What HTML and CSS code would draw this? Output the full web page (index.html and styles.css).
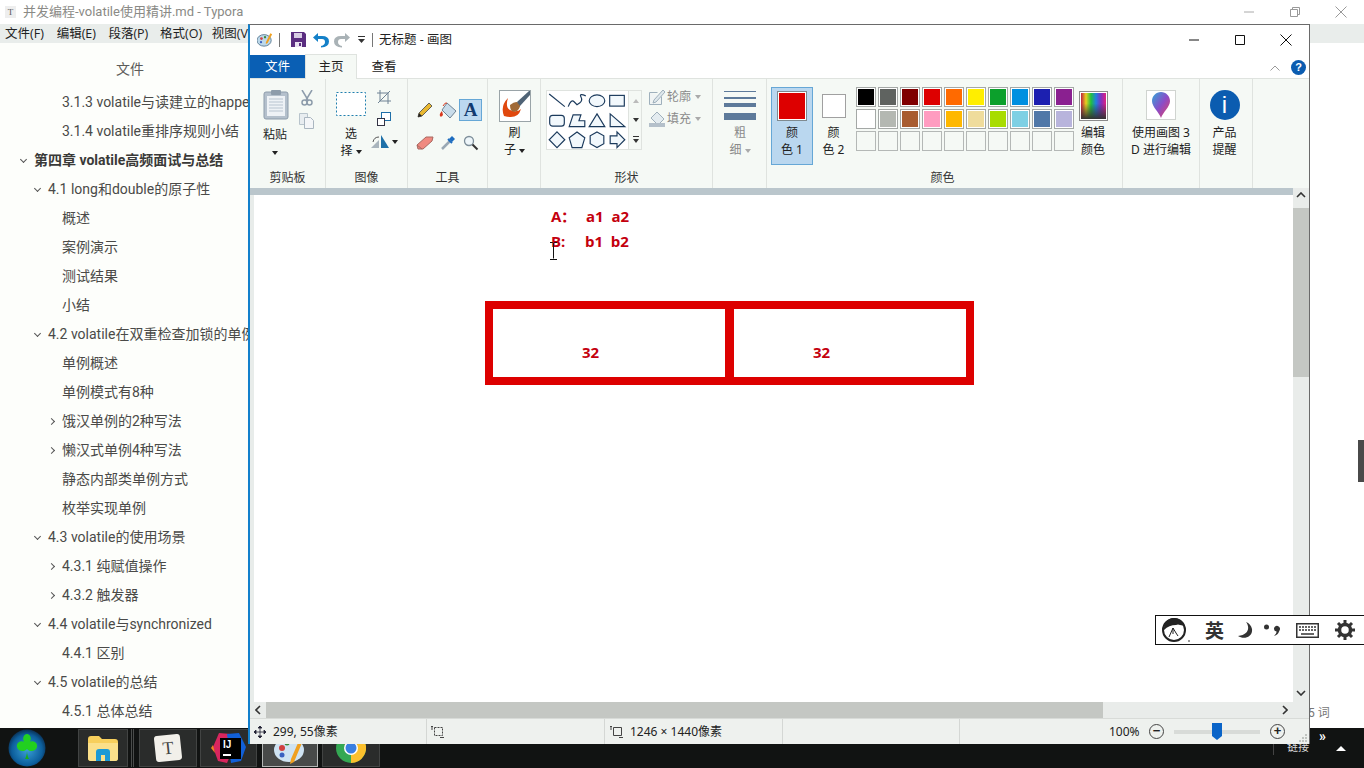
FILE: index.html
```html
<!DOCTYPE html>
<html lang="zh-CN">
<head>
<meta charset="utf-8">
<title>无标题 - 画图</title>
<link rel="stylesheet" href="styles.css">
</head>
<body>
<div class="desktop">

  <div class="typora">
    <div class="ty-title">
      <span class="ty-icon">T</span>
      <span class="ty-name">并发编程-volatile使用精讲.md - Typora</span>
      <div class="ty-ctrls">
        <svg width="12" height="12" viewBox="0 0 12 12"><path d="M1 6h10" stroke="#aaa" fill="none"/></svg>
        <svg width="12" height="12" viewBox="0 0 12 12"><path d="M1.500 3.500h7v7h-7zM3.500 3.500v-2h7v7h-2" stroke="#999" fill="none"/></svg>
        <svg width="12" height="12" viewBox="0 0 12 12"><path d="M.5.500l11 11M11.500.500l-11 11" stroke="#999" fill="none"/></svg>
      </div>
    </div>
    <div class="ty-menu">
      <span class="m1">文件(F)</span><span class="m1">编辑(E)</span><span class="m1">段落(P)</span><span class="m1">格式(O)</span><span class="m1">视图(V)</span>
    </div>
    <div class="ty-main">
      <aside class="toc">
        <div class="toc-head">文件</div>
        <div class="row l3">3.1.3 volatile与读建立的happens-before</div>
        <div class="row l3">3.1.4 volatile重排序规则小结</div>
        <div class="row l1 strong"><i class="chev down"></i>第四章 volatile高频面试与总结</div>
        <div class="row l2"><i class="chev down"></i>4.1 long和double的原子性</div>
        <div class="row l3">概述</div>
        <div class="row l3">案例演示</div>
        <div class="row l3">测试结果</div>
        <div class="row l3">小结</div>
        <div class="row l2"><i class="chev down"></i>4.2 volatile在双重检查加锁的单例中的应用</div>
        <div class="row l3">单例概述</div>
        <div class="row l3">单例模式有8种</div>
        <div class="row l3"><i class="chev right"></i>饿汉单例的2种写法</div>
        <div class="row l3"><i class="chev right"></i>懒汉式单例4种写法</div>
        <div class="row l3">静态内部类单例方式</div>
        <div class="row l3">枚举实现单例</div>
        <div class="row l2"><i class="chev down"></i>4.3 volatile的使用场景</div>
        <div class="row l3"><i class="chev right"></i>4.3.1 纯赋值操作</div>
        <div class="row l3"><i class="chev right"></i>4.3.2 触发器</div>
        <div class="row l2"><i class="chev down"></i>4.4 volatile与synchronized</div>
        <div class="row l3">4.4.1 区别</div>
        <div class="row l2"><i class="chev down"></i>4.5 volatile的总结</div>
        <div class="row l3">4.5.1 总体总结</div>
      </aside>
      <div class="ty-doc">
        <div class="ty-thumb"></div>
        <div class="ty-count">5 词</div>
      </div>
    </div>
  </div>

  <div class="taskbar">
    <div class="orb">
      <svg width="38" height="38" viewBox="0 0 38 38">
        <defs><radialGradient id="og" cx=".5" cy=".55" r=".55"><stop offset="0" stop-color="#3aa0d8"/><stop offset=".75" stop-color="#0c5e9c"/><stop offset="1" stop-color="#0a2f52"/></radialGradient></defs>
        <circle cx="19" cy="19" r="18.500" fill="url(#og)"/>
        <path d="M19 20c-2 3-9 3-10-2s5-7 7-5c-2-4 0-8 3-8s5 4 3 8c2-2 8 0 7 5s-8 5-10 2z" fill="#22d020"/>
        <path d="M19 19c0 4 0 8-2 11h4c-2-3-2-7-2-11z" fill="#18b018"/>
      </svg>
    </div>
    <div class="tb-gap"></div>
    <div class="tb-btn b-folder">
      <svg width="30" height="26" viewBox="0 0 30 26"><path d="M0 4q0-3 3-3h8l3 3h13q3 0 3 3v16q0 3-3 3H3q-3 0-3-3z" fill="#f7cf5c"/><path d="M0 8h30v15q0 3-3 3H3q-3 0-3-3z" fill="#fbe08a"/><path d="M8 26v-9q0-3 3-3h8q3 0 3 3v9h-5v-6h-4v6z" fill="#1c9ad6"/></svg>
    </div>
    <div class="tb-sep"></div>
    <div class="tb-btn b-typora">
      <div class="t-tile">T</div>
    </div>
    <div class="tb-btn b-ij">
      <svg width="36" height="34" viewBox="0 0 36 34"><path d="M2 16L8 2l12 1 4 10-8 19-9-2z" fill="#d8265e"/><path d="M16 3l12-1 7 14-5 14-10 2z" fill="#1160d8"/><path d="M2 14L0 17l4 5z" fill="#f58220"/></svg>
      <div class="ij-tile"><span>IJ</span><i></i></div>
    </div>
    <div class="tb-btn b-paint">
      <svg width="32" height="30" viewBox="0 0 32 30"><ellipse cx="15" cy="15" rx="15" ry="12" fill="#cfe3f2"/><circle cx="8" cy="13" r="3" fill="#d04040"/><circle cx="13" cy="8" r="2.500" fill="#3a8a3a"/><circle cx="8" cy="20" r="2.500" fill="#3a60c0"/><path d="M27 1l3 2-10 24-4 2 1-5z" fill="#f0a020"/></svg>
    </div>
    <div class="tb-btn b-chrome">
      <svg width="30" height="30" viewBox="0 0 30 30"><circle cx="15" cy="15" r="15" fill="#34a853"/><path d="M15 15L2 7.500A15 15 0 0 1 28 7.500z" fill="#ea4335"/><path d="M15 15L28 7.500A15 15 0 0 1 15 30z" fill="#fbc02d"/><circle cx="15" cy="15" r="7" fill="#fff"/><circle cx="15" cy="15" r="5.500" fill="#3a7fe0"/></svg>
    </div>
    <div class="tray">
      <span class="tray-sep"></span>
      <span class="tray-link">链接</span>
      <span class="tray-more">»</span>
      <span class="tray-up"></span>
    </div>
  </div>

  <div class="paint">
    <div class="p-title">
      <svg class="qa-app" width="16" height="15" viewBox="0 0 18 16"><ellipse cx="8" cy="9" rx="8" ry="6.500" fill="#bcd8ea" stroke="#5a7a90"/><circle cx="5" cy="7" r="1.500" fill="#d04040"/><circle cx="9" cy="5.500" r="1.300" fill="#3a8a3a"/><circle cx="4.500" cy="11" r="1.300" fill="#3a60c0"/><path d="M15 1l2 1-5 10-2 1 0-2z" fill="#f0a020"/></svg>
      <span class="qa-sep"></span>
      <svg class="qa-save" width="15" height="15" viewBox="0 0 15 15"><path d="M0 0h13l2 2v13H0z" fill="#5a2d80"/><path d="M3 1h8v5H3z" fill="#d8cce4"/><path d="M4 10h7v5H4z" fill="#e8e0f0"/><path d="M8 11h2v3H8z" fill="#5a2d80"/></svg>
      <svg class="qa-undo" width="16" height="16" viewBox="0 0 16 16"><path d="M5 1L0 5.500 5 10V7h4q3 0 3 3t-4 4v1.500q8-.5 8-6T9 4H5z" fill="#1480c8"/></svg>
      <svg class="qa-redo" width="16" height="16" viewBox="0 0 16 16"><path d="M11 1l5 4.500L11 10V7H7q-3 0-3 3t4 4v1.500q-8-.5-8-6T7 4h4z" fill="#a9b2b6"/></svg>
      <svg class="qa-drop" width="7" height="8" viewBox="0 0 7 8"><path d="M0 0h7v1H0zM0 3h7L3.500 7z" fill="#333"/></svg>
      <span class="qa-sep qa-last"></span>
      <span class="p-name">无标题 - 画图</span>
      <div class="win-ctrls">
        <svg width="12" height="12" viewBox="0 0 12 12"><path d="M1 6h10" stroke="#111" fill="none"/></svg>
        <svg width="12" height="12" viewBox="0 0 12 12"><path d="M1.500 1.500h9v9h-9z" stroke="#111" fill="none"/></svg>
        <svg width="12" height="12" viewBox="0 0 12 12"><path d="M.5.500l11 11M11.500.500l-11 11" stroke="#111" fill="none"/></svg>
      </div>
    </div>

    <div class="p-tabs">
      <span class="tab tab-file">文件</span>
      <span class="tab tab-on">主页</span>
      <span class="tab tab-view">查看</span>
      <svg class="collapse" width="10" height="6" viewBox="0 0 10 6"><path d="M.5 5.500L5 1l4.500 4.500" stroke="#999" fill="none"/></svg>
      <span class="help">?</span>
    </div>

    <div class="ribbon">
      <section class="grp g1">
        <div class="body">
          <div class="big w50">
            <svg class="ic30" width="26" height="31" viewBox="0 0 26 31"><rect x="1" y="3" width="24" height="27" rx="2" fill="#b4c0cc" stroke="#8d9cab"/><rect x="4" y="7" width="18" height="20" fill="#eef2f6"/><path d="M6 10h14M6 13h14M6 16h14M6 19h14M6 22h14" stroke="#b8c4d0"/><rect x="8" y="1" width="10" height="5" rx="1" fill="#8d9cab"/></svg>
            <div class="lbl">粘贴</div>
            <div class="lbl"><i class="caret"></i></div>
          </div>
          <div class="smalls sm-clip">
            <svg width="12" height="16" viewBox="0 0 12 16"><path d="M1 0l6 10M11 0L5 10" stroke="#8d9cab" stroke-width="1.500" fill="none"/><circle cx="3.500" cy="12.500" r="2.500" fill="none" stroke="#8d9cab" stroke-width="1.500"/><circle cx="8.500" cy="12.500" r="2.500" fill="none" stroke="#8d9cab" stroke-width="1.500"/></svg>
            <svg width="16" height="16" viewBox="0 0 16 16"><path d="M.5.500h8v11h-8z" fill="#e8edf0" stroke="#b8c4cc"/><path d="M5.500 4.500h6l3 3v8h-9z" fill="#f4f6f8" stroke="#aab6c0"/></svg>
          </div>
        </div>
        <div class="glabel">剪贴板</div>
      </section>

      <section class="grp g2">
        <div class="body">
          <div class="big w50 top15">
            <svg class="ic24" width="30" height="24" viewBox="0 0 30 24"><rect x=".5" y=".5" width="29" height="23" fill="#fff" stroke="#1f7fae" stroke-dasharray="2 2"/></svg>
            <div class="lbl">选</div>
            <div class="lbl">择<i class="caret cl"></i></div>
          </div>
          <div class="smalls sm-img">
            <svg width="14" height="14" viewBox="0 0 14 14"><path d="M3 0v11h11M0 3h11v11M1 13L13 1" stroke="#6e8294" fill="none"/></svg>
            <svg width="14" height="14" viewBox="0 0 14 14"><rect x="4.500" y=".5" width="9" height="8" fill="#fff" stroke="#1f6fa8"/><rect x=".5" y="6.500" width="7" height="7" fill="#fff" stroke="#334"/></svg>
            <div class="rot"><svg width="18" height="14" viewBox="0 0 18 14"><path d="M0 13L8 5v8z" fill="#a8b4bc"/><path d="M10 0l8 13h-8z" fill="#1e70a8"/><path d="M2 7q1-5 6-5" stroke="#555" fill="none"/></svg><i class="caret cl"></i></div>
          </div>
        </div>
        <div class="glabel">图像</div>
      </section>

      <section class="grp g3">
        <div class="body tools">
          <span class="tool"><svg width="16" height="16" viewBox="0 0 16 16"><path d="M1 15l1-4L12 1l3 3L5 14z" fill="#e8b830" stroke="#444" stroke-width=".8"/><path d="M1 15l1-4 3 3z" fill="#222"/></svg></span>
          <span class="tool"><svg width="18" height="18" viewBox="0 0 18 18"><path d="M8 2l9 8-6 7-8-8z" fill="#c8dcea" stroke="#6d8294"/><path d="M3 10q-3 3-2 5t3-1z" fill="#d83a20"/><path d="M4 5q2-4 4-3" stroke="#d83a20" fill="none"/></svg></span>
          <span class="tool on">A</span>
          <span class="tool"><svg width="18" height="14" viewBox="0 0 18 14"><path d="M1 9l9-8h7l-1 4-9 8H2z" fill="#f08a80" stroke="#a86860"/><path d="M1 9l5 4" stroke="#a86860"/></svg></span>
          <span class="tool"><svg width="16" height="16" viewBox="0 0 16 16"><path d="M2 14l8-8" stroke="#99a8b4" stroke-width="2.500"/><path d="M9 4l3-3 3 3-3 3z" fill="#1d6cc0"/><path d="M8 4l4 4" stroke="#1d6cc0" stroke-width="2"/></svg></span>
          <span class="tool"><svg width="16" height="16" viewBox="0 0 16 16"><circle cx="6" cy="6" r="4.500" fill="#eef6fa" stroke="#7d8e9a" stroke-width="1.300"/><path d="M9.500 9.500l5 5" stroke="#333" stroke-width="2"/></svg></span>
        </div>
        <div class="glabel">工具</div>
      </section>

      <section class="grp g4">
        <div class="body">
          <div class="big w53 top11">
            <div class="brush"><svg width="30" height="30" viewBox="0 0 30 30"><path d="M4 25Q0 15 8 7q-3 9 2 12 7 3 11-1-3 11-17 7z" fill="#e0480e"/><path d="M10 14q6-5 9-2 3 3-2 8-7 3-7-6z" fill="#a06a38"/><path d="M17 11L29 0h1v4L20 15z" fill="#4f6376"/></svg></div>
            <div class="lbl mt2">刷</div>
            <div class="lbl">子<i class="caret cl"></i></div>
          </div>
        </div>
        <div class="glabel"></div>
      </section>

      <section class="grp g5">
        <div class="body shapes-body">
          <div class="gallery">
            <div class="gal-grid">
              <svg viewBox="0 0 20 20"><path d="M2 3l16 13" class="sh"/></svg>
              <svg viewBox="0 0 20 20"><path d="M1 16q3-8 6-5t3 3 3-2 1-6 5-1" class="sh"/></svg>
              <svg viewBox="0 0 20 20"><ellipse cx="10" cy="10" rx="8" ry="6" class="sh fl"/></svg>
              <svg viewBox="0 0 20 20"><rect x="2.500" y="4.500" width="15" height="11" class="sh fl"/></svg>
              <svg viewBox="0 0 20 20"><rect x="2.500" y="4.500" width="15" height="11" rx="3" class="sh fl"/></svg>
              <svg viewBox="0 0 20 20"><path d="M6 4h8l-2 6h6v6H2z" class="sh fl"/></svg>
              <svg viewBox="0 0 20 20"><path d="M10 3l8 13H2z" class="sh fl"/></svg>
              <svg viewBox="0 0 20 20"><path d="M3 3l15 13H3z" class="sh fl"/></svg>
              <svg viewBox="0 0 20 20"><path d="M10 2l8 8-8 8-8-8z" class="sh fl"/></svg>
              <svg viewBox="0 0 20 20"><path d="M10 2l8 6-3 10H5L2 8z" class="sh fl"/></svg>
              <svg viewBox="0 0 20 20"><path d="M10 2l7 4v8l-7 4-7-4V6z" class="sh fl"/></svg>
              <svg viewBox="0 0 20 20"><path d="M3 6h7V2l8 8-8 8v-4H3z" class="sh fl"/></svg>
            </div>
            <div class="gal-scroll">
              <span class="gs up"></span>
              <span class="gs dn"></span>
              <span class="gs more"></span>
            </div>
          </div>
          <div class="outline">
            <div class="ol-row"><svg width="16" height="16" viewBox="0 0 16 16"><path d="M.5 3.500h8M.5 3.500v12h12v-8" stroke="#9fb0bc" fill="#f0f4f4"/><path d="M5 11l9-10 2 2-9 10-3 1z" fill="#dfe8ec" stroke="#9fb0bc"/></svg><span>轮廓</span><i class="caret grey"></i></div>
            <div class="ol-row"><svg width="16" height="16" viewBox="0 0 16 16"><path d="M8 1l7 7-6 6-7-7z" fill="#e4ecf0" stroke="#9fb0bc"/><path d="M0 12h16v4H0z" fill="#b4c0ca"/></svg><span>填充</span><i class="caret grey"></i></div>
          </div>
        </div>
        <div class="glabel">形状</div>
      </section>

      <section class="grp g6">
        <div class="body">
          <div class="big w54 top12">
            <div class="weights"><i class="w1"></i><i class="w2"></i><i class="w3"></i><i class="w4"></i></div>
            <div class="lbl dim">粗</div>
            <div class="lbl dim">细<i class="caret grey cl"></i></div>
          </div>
        </div>
        <div class="glabel"></div>
      </section>

      <section class="grp g7">
        <div class="body colors-body">
          <div class="color-pick active">
            <div class="cswatch big-s"><i class="p4"></i></div>
            <div class="lbl">颜</div>
            <div class="lbl">色 1</div>
          </div>
          <div class="color-pick second">
            <div class="cswatch small-s"><i class="p11"></i></div>
            <div class="lbl">颜</div>
            <div class="lbl">色 2</div>
          </div>
          <div class="palette">
            <span class="cell"><i class="p1"></i></span><span class="cell"><i class="p2"></i></span><span class="cell"><i class="p3"></i></span><span class="cell"><i class="p4"></i></span><span class="cell"><i class="p5"></i></span><span class="cell"><i class="p6"></i></span><span class="cell"><i class="p7"></i></span><span class="cell"><i class="p8"></i></span><span class="cell"><i class="p9"></i></span><span class="cell"><i class="p10"></i></span>
            <span class="cell"><i class="p11"></i></span><span class="cell"><i class="p12"></i></span><span class="cell"><i class="p13"></i></span><span class="cell"><i class="p14"></i></span><span class="cell"><i class="p15"></i></span><span class="cell"><i class="p16"></i></span><span class="cell"><i class="p17"></i></span><span class="cell"><i class="p18"></i></span><span class="cell"><i class="p19"></i></span><span class="cell"><i class="p20"></i></span>
            <span class="cell"></span><span class="cell"></span><span class="cell"></span><span class="cell"></span><span class="cell"></span><span class="cell"></span><span class="cell"></span><span class="cell"></span><span class="cell"></span><span class="cell"></span>
          </div>
          <div class="big w34 top12">
            <div class="edit-c"><i></i></div>
            <div class="lbl">编辑</div>
            <div class="lbl">颜色</div>
          </div>
        </div>
        <div class="glabel gl-colors">颜色</div>
      </section>

      <section class="grp g8">
        <div class="body">
          <div class="big wfull top11">
            <div class="tile3d"><svg width="20" height="28" viewBox="0 0 20 28"><defs><linearGradient id="d3" x1="0" y1="0" x2="1" y2="1"><stop offset="0" stop-color="#30a8d8"/><stop offset=".5" stop-color="#8a4cc8"/><stop offset="1" stop-color="#e8405c"/></linearGradient></defs><path d="M10 1c5 0 9 4 9 9 0 6-7 11-9 17C8 21 1 16 1 10c0-5 4-9 9-9z" fill="url(#d3)"/></svg></div>
            <div class="lbl">使用画图 3</div>
            <div class="lbl">D 进行编辑</div>
          </div>
        </div>
        <div class="glabel"></div>
      </section>

      <section class="grp g9">
        <div class="body">
          <div class="big wfull top11 pr3">
            <div class="info">i</div>
            <div class="lbl">产品</div>
            <div class="lbl">提醒</div>
          </div>
        </div>
        <div class="glabel"></div>
      </section>
    </div>

    <div class="work">
      <div class="viewport">
        <div class="sheet">
          <div class="ct l-a">A：</div><div class="ct l-a2">a1&nbsp; a2</div>
          <div class="ct l-b">B:</div><div class="ct l-b2">b1&nbsp; b2</div>
          <div class="bitbox"><div class="bit bit-l"></div><div class="bit bit-r"></div></div>
          <div class="ct n1">32</div>
          <div class="ct n2">32</div>
          <svg class="ibeam" width="9" height="18" viewBox="0 0 9 18"><path d="M1 .5h2.500L4.500 1.500 5.500.5H8M4.500 1.500v15M1 17.500h7" stroke="#111" fill="none"/></svg>
        </div>
      </div>
      <div class="vbar">
        <span class="sarrow"><svg width="10" height="6" viewBox="0 0 10 6"><path d="M1 5l4-4 4 4" stroke="#333" stroke-width="1.600" fill="none"/></svg></span>
        <div class="vtrack"><div class="vthumb"></div></div>
        <span class="sarrow"><svg width="10" height="6" viewBox="0 0 10 6"><path d="M1 1l4 4 4-4" stroke="#333" stroke-width="1.600" fill="none"/></svg></span>
      </div>
      <div class="hbar">
        <span class="harrow"><svg width="6" height="10" viewBox="0 0 6 10"><path d="M5 1L1 5l4 4" stroke="#333" stroke-width="1.600" fill="none"/></svg></span>
        <div class="htrack"><div class="hthumb"></div></div>
        <span class="harrow"><svg width="6" height="10" viewBox="0 0 6 10"><path d="M1 1l4 4-4 4" stroke="#333" stroke-width="1.600" fill="none"/></svg></span>
      </div>
      <div class="corner"></div>
    </div>

    <div class="status">
      <div class="st st1"><svg width="12" height="12" viewBox="0 0 12 12"><path d="M6 0v12M0 6h12M6 0L4 2h4zM6 12l-2-2h4zM0 6l2-2v4zM12 6l-2-2v4z" stroke="#223" stroke-width=".8" fill="#223"/></svg><span>299, 55像素</span></div>
      <div class="st st2"><svg width="13" height="13" viewBox="0 0 13 13"><path d="M3.500 2.500h8v8h-8z" stroke="#444" stroke-dasharray="2 1" fill="none"/><path d="M1 5V1M1 1l-1 1M1 1l1 1M9 12.500h4" stroke="#444" fill="none"/></svg></div>
      <div class="st st3"><svg width="13" height="13" viewBox="0 0 13 13"><path d="M3.500 2.500h8v8h-8z" stroke="#444" fill="none"/><path d="M1 5V1M1 1l-1 1M1 1l1 1M9 12.500h4" stroke="#444" fill="none"/></svg><span>1246 × 1440像素</span></div>
      <div class="st st4"></div>
      <div class="zoomer">
        <span class="zpct">100%</span>
        <span class="zbtn">−</span>
        <div class="zslider"><i class="ztrack"></i><svg class="zthumb" width="10" height="17" viewBox="0 0 10 17"><path d="M0 0h10v13l-5 4-5-4z" fill="#0a64c8"/></svg></div>
        <span class="zbtn">+</span>
      </div>
      <svg class="grip" width="8" height="8" viewBox="0 0 8 8"><path d="M6 0h2v2H6zM3 3h2v2H3zM6 3h2v2H6zM0 6h2v2H0zM3 6h2v2H3zM6 6h2v2H6z" fill="#c0c4c0"/></svg>
    </div>
  </div>

  <div class="ime">
    <svg class="ime-logo" width="30" height="26" viewBox="0 0 30 26"><circle cx="13" cy="13" r="11" fill="#fff" stroke="#222" stroke-width="2"/><path d="M3 13A10 10 0 0 1 24 10q-2-2-5-2-2-1-4 0-7 0-12 5z" fill="#222"/><path d="M8 20l4-9 3 5 2 3M12 11v6" stroke="#222" fill="none"/><circle cx="28" cy="24" r="1" fill="#777"/></svg>
    <span class="ime-char">英</span>
    <svg class="ime-moon" width="18" height="18" viewBox="0 0 18 18"><path d="M10 1C14 6 13 14 2 15 8 19 17 16 16 8 15.500 5 13 2 10 1z" fill="#333"/></svg>
    <svg class="ime-punct" width="18" height="14" viewBox="0 0 18 14"><circle cx="3.500" cy="4" r="2.500" fill="#333"/><path d="M11 6a3 3 0 1 1 5.500 1.500Q15 12 11 13q3-3 2.500-4.500Q11 8 11 6z" fill="#333"/></svg>
    <svg class="ime-kbd" width="23" height="15" viewBox="0 0 23 15"><rect x=".75" y=".75" width="21.500" height="13.500" fill="#fff" stroke="#333" stroke-width="1.500"/><path d="M3 4h17M3 7h17" stroke="#333" stroke-width="1.500" stroke-dasharray="2 1"/><path d="M5 11h13" stroke="#333" stroke-width="1.500"/></svg>
    <svg width="20" height="20" viewBox="0 0 20 20"><circle cx="10" cy="10" r="5.500" fill="none" stroke="#333" stroke-width="3.500"/><path d="M10 0v4M10 16v4M0 10h4M16 10h4M3 3l3 3M14 14l3 3M17 3l-3 3M6 14l-3 3" stroke="#333" stroke-width="3"/></svg>
  </div>

</div>
</body>
</html>
```

FILE: styles.css
```css
* { box-sizing: border-box; }
html, body { margin: 0; padding: 0; }
body { width: 1364px; height: 768px; overflow: hidden; background: #fff; font-family: Roboto, "Noto Sans CJK SC", sans-serif; }
.desktop { position: relative; width: 1364px; height: 768px; overflow: hidden; }

/* Typora */
.typora { height: 728px; display: flex; flex-direction: column; background: #fff; }
.ty-title { height: 24px; display: flex; align-items: center; padding-left: 5px; color: #8a8a86; font-size: 13px; }
.ty-icon { width: 11px; height: 12px; font: 9px/12px "Liberation Serif", serif; text-align: center; background: #eee; color: #555; margin-right: 7px; }
.ty-name { white-space: nowrap; line-height: 24px; }
.ty-ctrls { margin-left: auto; display: flex; gap: 34px; padding-right: 17px; }
.ty-menu { height: 19px; flex: none; background: #e9edeb; display: flex; align-items: center; padding-left: 5px; font-family: "Open Sans", "Noto Sans CJK SC", sans-serif; font-size: 12.500px; color: #222; }
.m1 { width: 51.700px; line-height: 19px; white-space: nowrap; flex: none; }
.ty-main { flex: 1; display: flex; min-height: 0; }
.toc { width: 248px; flex: none; overflow: hidden; background: #fdfefb; color: #4a4a48; font-size: 14px; }
.toc-head { height: 45px; line-height: 53px; text-align: center; padding-left: 12px; color: #5c5c5a; }
.row { position: relative; height: 29px; line-height: 29px; white-space: nowrap; }
.l1 { padding-left: 34px; }
.l2 { padding-left: 48px; }
.l3 { padding-left: 62px; }
.strong { font-weight: 700; color: #3a3a38; }
.chev { display: inline-block; position: absolute; width: 5px; height: 5px; border-right: 1px solid #555; border-bottom: 1px solid #555; top: 11px; }
.chev.down { transform: rotate(45deg); margin-left: -13px; }
.chev.right { transform: rotate(-45deg); margin-left: -13px; top: 12px; }
.ty-doc { flex: 1; position: relative; background: #fff; }
.ty-thumb { position: absolute; right: 0; top: 397px; width: 6px; height: 42px; background: #4a4a4a; }
.ty-count { position: absolute; left: 1060px; top: 660px; font-size: 12px; line-height: 20px; color: #777; white-space: nowrap; }

/* Taskbar */
.taskbar { height: 40px; background: #111312; display: flex; align-items: flex-start; padding-top: 1px; }
.orb { width: 38px; height: 38px; margin-left: 8px; flex: none; }
.tb-gap { width: 32px; flex: none; }
.tb-btn { position: relative; height: 38px; display: flex; align-items: center; justify-content: center; background: #2a2c2b; border: 1px solid #424443; flex: none; }
.b-folder { width: 50px; }
.tb-sep { width: 3px; height: 38px; margin: 0 5px 0 3px; border-left: 1px solid #4a4c4b; border-right: 1px solid #4a4c4b; flex: none; }
.b-typora { width: 58px; margin-right: 3px; }
.b-ij { width: 57px; margin-right: 5px; }
.b-paint { width: 56px; margin-right: 4px; background: #484a49; border-color: #b4b6b5; padding-top: 4px; }
.b-chrome { width: 58px; }
.t-tile { width: 26px; height: 26px; background: #f2f0ea; border-radius: 3px; transform: rotate(-6deg); color: #444; font: 18px/26px "Liberation Serif", serif; text-align: center; }
.ij-tile { position: absolute; left: 19px; top: 8px; width: 21px; height: 21px; background: #000; color: #fff; font: 700 10px/12px "Liberation Sans", sans-serif; padding: 1px 0 0 3px; }
.ij-tile span { display: block; }
.ij-tile i { display: block; width: 8px; height: 2px; background: #fff; margin-top: 3px; }
.tray { margin-left: auto; width: 91px; height: 38px; display: flex; position: relative; color: #fff; }
.tray-sep { width: 1px; height: 14px; margin-top: 12px; background: #444; }
.tray-link { font-size: 11px; line-height: 14px; margin: 12px 0 0 13px; color: #d8d8d8; white-space: nowrap; }
.tray-more { position: absolute; left: 46px; top: 0; font-size: 14px; line-height: 14px; font-weight: 700; }
.tray-up { width: 0; height: 0; border: 5px solid transparent; border-top: 0; border-bottom: 5px solid #fff; margin: 17px 0 0 27px; }

/* Paint window */
.paint { position: absolute; left: 248px; top: 24px; width: 1062px; height: 720px; display: flex; flex-direction: column; background: #fff; border-top: 1px solid #6a6a6a; border-left: 2px solid #1280cc; border-right: 1px solid #6a6a6a; font-family: "Noto Sans", "Noto Sans CJK SC", sans-serif; color: #222; font-size: 12px; }
.p-title { height: 29px; flex: none; display: flex; align-items: center; background: #fff; padding-left: 7px; }
.qa-sep { width: 1px; height: 14px; background: #777; margin: 0 11px 0 6px; flex: none; }
.qa-sep.qa-last { margin: 0 6px 0 7px; }
.qa-save { margin-right: 7px; }
.qa-undo { margin-right: 5px; }
.qa-redo { margin-right: 8px; }
.p-name { font-size: 12.500px; line-height: 16px; }
.win-ctrls { margin-left: auto; display: flex; gap: 34px; padding-right: 17px; }
.p-tabs { height: 25px; flex: none; display: flex; align-items: stretch; background: #fff; border-bottom: 1px solid #dfe3df; position: relative; }
.tab { font-size: 12.500px; line-height: 26px; text-align: center; }
.tab-file { width: 55px; background: #0a5fb4; color: #fff; margin-top: 1px; height: 23px; line-height: 23px; }
.tab-on { width: 52px; background: #f5f9f5; border: 1px solid #dfe3df; border-bottom: 0; height: 25px; line-height: 24px; }
.tab-view { width: 54px; }
.collapse { margin: 11px 0 0 auto; }
.help { width: 15px; height: 15px; margin: 6px 3px 0 11px; border-radius: 50%; background: #0b5cb0; color: #fff; font: 700 11px/15px "Liberation Sans", sans-serif; text-align: center; }

.ribbon { height: 109px; flex: none; display: flex; background: #f5f9f5; }
.grp { display: flex; flex-direction: column; border-right: 1px solid #dfe3df; flex: none; }
.g1 { width: 76px; } .g2 { width: 82px; } .g3 { width: 80px; } .g4 { width: 53px; } .g5 { width: 172px; }
.g6 { width: 54px; } .g7 { width: 356px; } .g8 { width: 77px; } .g9 { width: 53px; }
.body { flex: 1; display: flex; min-height: 0; }
.glabel { height: 20px; line-height: 19px; text-align: center; font-size: 12px; color: #333; }
.gl-colors { padding-right: 4px; }
.big { display: flex; flex-direction: column; align-items: center; padding-top: 10px; flex: none; }
.big > svg, .big > div:first-child { flex: none; }
.w50 { width: 50px; } .w53 { width: 53px; } .w54 { width: 54px; } .w34 { width: 34px; } .wfull { width: 100%; }
.top15 { padding-top: 13px; } .top11 { padding-top: 11px; } .top12 { padding-top: 12px; }
.pr3 { padding-right: 3px; }
.ic30 { margin-bottom: 6px; margin-left: 2px; }
.ic24 { margin-bottom: 9px; }
.lbl { height: 17px; line-height: 17px; font-size: 12px; white-space: nowrap; text-align: center; }
.mt2 { margin-top: 2px; }
.dim { color: #8a8a8a; }
.caret { display: inline-block; width: 0; height: 0; border: 3px solid transparent; border-top: 4px solid #222; border-bottom: 0; vertical-align: middle; }
.caret.cl { margin-left: 3px; }
.caret.grey { border-top-color: #aaa; }
.smalls { display: flex; flex-direction: column; align-items: center; padding-top: 11px; }
.sm-clip { width: 14px; gap: 7px; }
.sm-img { width: 24px; margin-left: -4px; gap: 8px; }
.rot { display: flex; align-items: center; margin-top: 1px; }
.rot .caret { margin-left: 3px; }
.tools { display: grid; grid-template-columns: repeat(3, 23px); grid-auto-rows: 22px; row-gap: 11px; padding: 20px 0 0 5px; align-content: start; }
.tool { display: flex; align-items: center; justify-content: center; }
.tool.on { background: #bcd8f0; border: 1px solid #66a7d6; font: 700 19px/20px "Liberation Serif", serif; color: #123a70; }
.brush { width: 32px; height: 32px; border: 1px solid #9aa4a8; background: #fff; }
.shapes-body { padding: 11px 0 0 5px; gap: 7px; }
.gallery { display: flex; width: 96px; height: 60px; border: 1px solid #dfe3df; background: #fff; flex: none; }
.gal-grid { width: 81px; display: grid; grid-template-columns: repeat(4, 20px); grid-auto-rows: 19.500px; }
.gal-grid svg { width: 20px; height: 19.500px; }
.sh { fill: none; stroke: #1b3a5c; stroke-width: 1.200; }
.sh.fl { fill: #f2f8fc; }
.gal-scroll { flex: 1; border-left: 1px solid #dfe3df; display: flex; flex-direction: column; align-items: center; background: #f5f9f5; }
.gs { height: 19.500px; width: 100%; position: relative; }
.gs::after { content: ""; position: absolute; left: 4px; top: 8px; border: 3px solid transparent; }
.gs.up::after { border-top: 0; border-bottom: 4px solid #bbb; }
.gs.dn::after { border-bottom: 0; border-top: 4px solid #333; }
.gs.more::after { border-bottom: 0; border-top: 4px solid #333; top: 9px; }
.gs.more::before { content: ""; position: absolute; left: 4px; top: 6px; width: 6px; height: 1px; background: #333; }
.outline { display: flex; flex-direction: column; gap: 6px; flex: none; margin-top: -1px; }
.ol-row { display: flex; align-items: center; height: 16px; color: #8a8a8a; gap: 2px; }
.ol-row span { line-height: 16px; }
.ol-row .caret { margin-left: 2px; }
.weights { width: 32px; height: 33px; display: flex; flex-direction: column; }
.weights i { display: block; background: #5d7a9a; }
.w1 { height: 1px; } .w2 { height: 2px; margin-top: 5px; } .w3 { height: 4px; margin-top: 4px; } .w4 { height: 7px; margin-top: 6px; }
.colors-body { padding: 8px 0 0 4px; }
.color-pick { width: 42px; height: 78px; display: flex; flex-direction: column; align-items: center; flex: none; border: 1px solid transparent; }
.color-pick.active { background: #bad7ef; border-color: #66a7d6; padding-top: 3px; }
.color-pick.second { width: 41px; padding-top: 6px; }
.cswatch { flex: none; }
.big-s { width: 30px; height: 30px; border: 1px solid #7f8a90; padding: 1px; background: #fff; margin-bottom: 3px; }
.small-s { width: 24px; height: 24px; border: 1px solid #a0a0a0; padding: 1px; background: #fff; margin-bottom: 6px; }
.cswatch i { display: block; width: 100%; height: 100%; }
.small-s i { background: #fff; }
.palette { display: grid; grid-template-columns: repeat(10, 20px); grid-auto-rows: 20px; gap: 2px; margin: 0 0 0 2px; align-content: start; flex: none; }
.cell { display: block; border: 1px solid #a4a8a6; padding: 1px; background: #fff; }
.palette .cell:nth-child(n+21) { background: transparent; border-color: #b4b8b6; }
.cell i { display: block; width: 100%; height: 100%; }
.p1 { background: #000; } .p2 { background: #5f6360; } .p3 { background: #7f0000; } .p4 { background: #dd0000; } .p5 { background: #ff6a00; }
.p6 { background: #ffee00; } .p7 { background: #0ca02c; } .p8 { background: #0090e0; } .p9 { background: #1c20b0; } .p10 { background: #8a2090; }
.p11 { background: #fff; } .p12 { background: #b4b8b2; } .p13 { background: #a85c30; } .p14 { background: #ff9cc0; } .p15 { background: #ffb800; }
.p16 { background: #efdc9c; } .p17 { background: #a8dc00; } .p18 { background: #7ed0e4; } .p19 { background: #5078a8; } .p20 { background: #b8b4dc; }
.colors-body .big { padding-top: 4px; margin-left: 2px; }
.edit-c { width: 29px; height: 30px; border: 1px solid #8a8a8a; padding: 1px; background: #fff; margin-bottom: 3px; }
.edit-c i { display: block; width: 100%; height: 100%; background: linear-gradient(to bottom, transparent 40%, #333 100%), linear-gradient(to right, #c02040, #e8d020, #20c040, #2080e0, #8030c0, #e02080); }
.tile3d { width: 30px; height: 30px; background: #fff; border: 1px solid #d0d4d0; display: flex; align-items: center; justify-content: center; margin-bottom: 4px; }
.info { width: 30px; height: 30px; border-radius: 50%; background: #0b5cb0; color: #fff; font: 400 24px/30px "Liberation Sans", sans-serif; text-align: center; margin-bottom: 4px; }

/* Canvas area */
.work { flex: 1; min-height: 0; display: grid; grid-template-columns: 1fr 16px; grid-template-rows: 1fr 16px; background: #e9ecea; }
.viewport { background: #e8ecea; border-top: 7px solid #bac6cc; padding-left: 4px; min-height: 0; overflow: hidden; }
.sheet { position: relative; background: #fff; height: 100%; }
.ct { position: absolute; font: 700 15px/20px "Open Sans", sans-serif; color: #c4000e; white-space: nowrap; }
.l-a { left: 297px; top: 11px; }
.l-a2 { left: 332px; top: 11px; }
.l-b { left: 297px; top: 36px; }
.l-b2 { left: 331px; top: 36px; }
.n1 { left: 328px; top: 147px; }
.n2 { left: 559px; top: 147px; }
.bitbox { position: absolute; left: 231px; top: 106px; width: 489px; height: 84px; display: flex; }
.bit { height: 100%; border: 8px solid #dd0000; }
.bit-l { width: 249px; border-right-width: 9px; }
.bit-r { flex: 1; border-left: 0; }
.ibeam { position: absolute; left: 295px; top: 47px; }
.vbar { grid-row: 1; grid-column: 2; display: flex; flex-direction: column; align-items: center; padding-bottom: 3px; }
.sarrow { height: 13px; flex: none; display: flex; align-items: center; justify-content: center; }
.vtrack { flex: 1; width: 100%; }
.vthumb { height: 169px; margin-top: 7px; background: #c4c7c3; }
.hbar { grid-row: 2; grid-column: 1; display: flex; align-items: stretch; }
.harrow { width: 16px; flex: none; display: flex; align-items: center; justify-content: center; }
.htrack { flex: 1; }
.hthumb { width: 837px; height: 100%; background: #c4c7c3; }
.corner { grid-row: 2; grid-column: 2; }

/* Status bar */
.status { height: 26px; flex: none; position: relative; display: flex; background: #eef1ee; border-top: 1px solid #d8dbd8; font-size: 12px; }
.st { display: flex; align-items: center; height: 100%; border-right: 1px solid #d4d7d4; gap: 7px; flex: none; }
.st span { line-height: 16px; white-space: nowrap; }
.st1 { width: 177px; padding-left: 4px; }
.st2 { width: 178px; padding-left: 4px; }
.st3 { width: 178px; padding-left: 5px; }
.st4 { width: 177px; }
.zoomer { flex: 1; display: flex; align-items: center; padding-left: 149px; }
.zpct { width: 40px; white-space: nowrap; line-height: 16px; }
.zbtn { width: 15px; height: 15px; border: 1.500px solid #444; border-radius: 50%; font: 700 13px/12px "Liberation Sans", sans-serif; text-align: center; flex: none; color: #222; }
.zslider { position: relative; width: 86px; height: 16px; margin: 0 10px; display: flex; align-items: center; flex: none; }
.ztrack { display: block; width: 100%; height: 4px; background: #d8dbd8; }
.zthumb { position: absolute; left: 38px; top: -1px; }
.grip { position: absolute; right: 2px; bottom: 2px; }

/* IME bar */
.ime { position: absolute; left: 1155px; top: 615px; width: 209px; height: 30px; background: #fff; border: 1px solid #111; border-right: 0; display: flex; align-items: center; padding-left: 5px; color: #333; }
.ime svg { flex: none; }
.ime-logo { margin-right: 14px; }
.ime-char { font: 700 19px/24px "Noto Sans CJK SC", sans-serif; margin-right: 12px; }
.ime-moon { margin-right: 9px; }
.ime-punct { margin-right: 15px; }
.ime-kbd { margin-right: 16px; }
```
